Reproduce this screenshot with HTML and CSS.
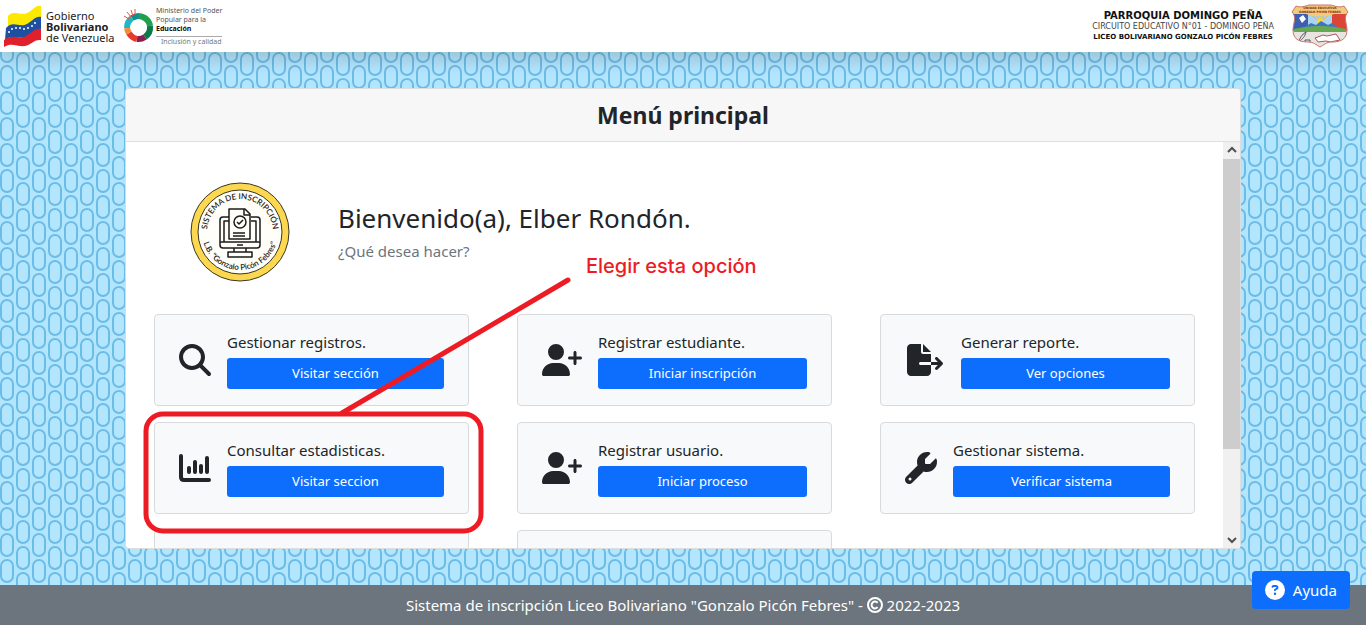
FILE: index.html
```html
<!DOCTYPE html>
<html lang="es">
<head>
<meta charset="utf-8">
<meta name="viewport" content="width=device-width, initial-scale=1">
<title>Menú principal</title>
<link rel="stylesheet" href="styles.css">
</head>
<body>
<svg class="defs" aria-hidden="true">
  <symbol id="user-plus" viewBox="0 0 640 512"><path d="M96 128a128 128 0 1 1 256 0A128 128 0 1 1 96 128zM0 482.3C0 383.8 79.8 304 178.3 304h91.4C368.2 304 448 383.8 448 482.3c0 16.4-13.3 29.7-29.7 29.7H29.7C13.3 512 0 498.7 0 482.3zM504 312V248H440c-13.3 0-24-10.7-24-24s10.7-24 24-24h64V136c0-13.3 10.7-24 24-24s24 10.7 24 24v64h64c13.3 0 24 10.7 24 24s-10.7 24-24 24H552v64c0 13.3-10.7 24-24 24s-24-10.7-24-24z"/></symbol>
</svg>

<header class="topbar">
  <div class="brand">
    <svg class="flag" viewBox="0 0 38 42" aria-hidden="true">
      <path fill="#fde800" d="M4 11C10 4 17 12 25 7c5-3 7-7 12-6v13c-6 0-8 5-13 7-8 3-14-3-20 3z"/>
      <path fill="#1f4fa0" d="M2 23c7-8 13 0 21-4 6-3 8-8 14-7v13c-6 0-9 6-15 7-8 2-13-3-21 3z"/>
      <path fill="#e0202b" d="M0 35c8-7 14 0 22-4 6-3 9-8 15-7v11c-7-1-10 5-16 6-8 1-13-4-21 1z"/>
      <g fill="#fff"><circle cx="5" cy="27" r="1"/><circle cx="8" cy="24" r="1"/><circle cx="12" cy="23" r="1"/><circle cx="16" cy="23" r="1"/><circle cx="20" cy="24" r="1"/><circle cx="24" cy="23" r="1"/><circle cx="28" cy="21" r="1"/><circle cx="31" cy="18" r="1"/></g>
    </svg>
    <p class="gov">Gobierno<br><strong>Bolivariano</strong><br>de Venezuela</p>
    <svg class="ring" viewBox="0 0 32 34" aria-hidden="true">
      <g fill="none" stroke-width="6">
        <path stroke="#1fa04a" d="M17 7a12 12 0 0 1 11 10"/>
        <path stroke="#0b7a4b" d="M28 17a12 12 0 0 1-5 11"/>
        <path stroke="#8c1d4f" d="M23 28a12 12 0 0 1-8 2"/>
        <path stroke="#e63a2e" d="M15 30a12 12 0 0 1-8-6"/>
        <path stroke="#f08a3c" d="M7 24a12 12 0 0 1-2-5"/>
        <path stroke="#1fb6c9" d="M5 19a12 12 0 0 1 5-10"/>
        <path stroke="#0f8f86" d="M10 9a12 12 0 0 1 7-2"/>
      </g>
      <path stroke="#e2554b" stroke-width="1" d="M5 3l4 5M9 1l2 6M13 0v6M2 7l5 3"/>
    </svg>
    <div class="ministry">
      <p>Ministerio del Poder<br>Popular para la<br><strong>Educación</strong></p>
      <p class="motto">Inclusión y calidad</p>
    </div>
  </div>
  <div class="school">
    <div class="school-text">
      <p class="parish">PARROQUIA DOMINGO PEÑA</p>
      <p class="circuit">CIRCUITO EDUCATIVO N°01 - DOMINGO PEÑA</p>
      <p class="lyceum">LICEO BOLIVARIANO GONZALO PICÓN FEBRES</p>
    </div>
    <svg class="crest" viewBox="0 0 60 44" role="img" aria-label="Escudo del liceo">
      <clipPath id="shield"><path d="M6 2c5 2 9 0 13-1h22c4 1 8 3 13 1l4 6c-5 5-1 12-1 18 0 9-6 12-15 12-6 0-8 3-12 5-4-2-6-5-12-5C9 38 3 35 3 26 3 20 7 13 2 8z"/></clipPath>
      <g clip-path="url(#shield)">
        <rect width="60" height="44" fill="#f4e6e2"/>
        <rect y="10" width="18" height="17" fill="#3d5fb0"/>
        <rect x="42" y="10" width="18" height="17" fill="#dd4438"/>
        <path fill="#a9d4f3" d="M18 10h24v14H18z"/>
        <path stroke="#f1b53c" stroke-width="1" d="M30 18L20 10M30 18L25 9M30 18V9M30 18l5-9M30 18l10-8"/>
        <circle cx="30" cy="17" r="3" fill="#f6d546"/>
        <path fill="#3f74c4" d="M10 26l11-7 5 2 5-4 7 4 4-2 9 7z"/>
        <path fill="#64a951" d="M4 25c16-4 36-4 52 0v4H4z"/>
        <path fill="#f3cb77" d="M0 0h60v10H44l-6 2H22l-6-2H0z"/>
        <path fill="#fff" d="M9 14l4-3 3 4-4 4z"/>
        <path fill="#e9e4df" d="M3 28h54v16H3z"/>
        <path fill="#fff" stroke="#a55" stroke-width="1" d="M25 34l8-3 4 1 9-2 4 6-10 2-4-1-8 1z"/>
        <path fill="none" stroke="#556" stroke-width="1" d="M8 39c2-5 4-9 8-11-1 5-4 7-6 9m5-1h5v3h-5z"/>
      </g>
      <path fill="none" stroke="#c9776c" d="M6 2c5 2 9 0 13-1h22c4 1 8 3 13 1l4 6c-5 5-1 12-1 18 0 9-6 12-15 12-6 0-8 3-12 5-4-2-6-5-12-5C9 38 3 35 3 26 3 20 7 13 2 8z"/>
      <text class="crest-text" x="30" y="5" text-anchor="middle">UNIDAD EDUCATIVA</text>
      <text class="crest-text" x="30" y="9" text-anchor="middle">GONZALO PICÓN FEBRES</text>
    </svg>
  </div>
</header>

<main class="main">
  <section class="panel">
    <h1 class="panel-title">Menú principal</h1>
    <div class="panel-body">
      <div class="content">
        <div class="welcome">
          <svg class="seal" viewBox="0 0 100 100" role="img" aria-label="Sistema de inscripción L.B. Gonzalo Picón Febres">
            <circle cx="50" cy="50" r="49" fill="#fbd84f" stroke="#3a3526"/>
            <circle cx="50" cy="50" r="42" fill="#fffef8" stroke="#3a3526"/>
            <path id="arc-top" fill="none" d="M17 50a33 33 0 0 1 66 0"/>
            <path id="arc-bottom" fill="none" d="M12 50a38 38 0 0 0 76 0"/>
            <text class="seal-text" text-anchor="middle"><textPath href="#arc-top" startOffset="50%">SISTEMA DE INSCRIPCIÓN</textPath></text>
            <text class="seal-text" text-anchor="middle"><textPath href="#arc-bottom" startOffset="50%">L.B. "Gonzalo Picón Febres"</textPath></text>
            <g fill="none" stroke="#1b1b1b" stroke-width="1.5" stroke-linejoin="round">
              <path d="M40 35h-7q-3 0-3 3v25q0 3 3 3h34q3 0 3-3V38q0-3-3-3h-6M39 39h-5v21M66 60V39h-5M30 60h40"/>
              <path fill="#fffef8" d="M39 57V27h16l5 5v25z"/>
              <path d="M54 27v6h6M43 51h12M43 54h12M47 63h6M44 66v4M56 66v4M38 70h24v5H38z"/>
              <circle cx="50" cy="40" r="6"/><path d="M47 40l2 2 4-4"/>
            </g>
          </svg>
          <div>
            <h2 class="greeting">Bienvenido(a), Elber Rondón.</h2>
            <p class="question">¿Qué desea hacer?</p>
          </div>
        </div>

        <div class="options">
          <article class="option">
            <svg class="icon" viewBox="0 0 512 512" aria-hidden="true"><path d="M416 208c0 45.9-14.9 88.3-40 122.7L502.6 457.4c12.5 12.5 12.5 32.8 0 45.3s-32.8 12.5-45.3 0L330.7 376c-34.4 25.2-76.8 40-122.7 40C93.1 416 0 322.9 0 208S93.1 0 208 0S416 93.1 416 208zM208 352a144 144 0 1 0 0-288 144 144 0 1 0 0 288z"/></svg>
            <div class="option-body"><p>Gestionar registros.</p><a class="btn" href="#registros">Visitar sección</a></div>
          </article>
          <article class="option">
            <svg class="icon icon-wide" aria-hidden="true"><use href="#user-plus"/></svg>
            <div class="option-body"><p>Registrar estudiante.</p><a class="btn" href="#estudiante">Iniciar inscripción</a></div>
          </article>
          <article class="option">
            <svg class="icon icon-wide" viewBox="-32 0 640 512" aria-hidden="true"><path d="M0 64C0 28.7 28.7 0 64 0H224V128c0 17.7 14.3 32 32 32H384V288H216c-13.3 0-24 10.7-24 24s10.7 24 24 24H384V448c0 35.3-28.7 64-64 64H64c-35.3 0-64-28.7-64-64V64zM384 336V288H494.1l-39-39c-9.4-9.4-9.4-24.6 0-33.9s24.6-9.4 33.9 0l80 80c9.4 9.4 9.4 24.6 0 33.9l-80 80c-9.4 9.4-24.6 9.4-33.9 0s-9.4-24.6 0-33.9l39-39H384zm0-208H256V0L384 128z"/></svg>
            <div class="option-body"><p>Generar reporte.</p><a class="btn" href="#reporte">Ver opciones</a></div>
          </article>
          <article class="option">
            <svg class="icon" viewBox="0 0 32 32" aria-hidden="true"><path class="line" d="M2 4v21q0 3 3 3h25M10 16v4M16 10v10M22 14v6M28 6v14"/></svg>
            <div class="option-body"><p>Consultar estadisticas.</p><a class="btn" href="#estadisticas">Visitar seccion</a></div>
          </article>
          <article class="option">
            <svg class="icon icon-wide" aria-hidden="true"><use href="#user-plus"/></svg>
            <div class="option-body"><p>Registrar usuario.</p><a class="btn" href="#usuario">Iniciar proceso</a></div>
          </article>
          <article class="option">
            <svg class="icon" viewBox="0 0 512 512" aria-hidden="true"><path d="M352 320c88.4 0 160-71.6 160-160c0-15.3-2.2-30.1-6.2-44.2c-3.1-10.8-16.4-13.2-24.3-5.3l-76.8 76.8c-3 3-7.1 4.7-11.3 4.7H336c-8.8 0-16-7.2-16-16V118.6c0-4.2 1.7-8.3 4.7-11.3l76.8-76.8c7.9-7.9 5.4-21.2-5.3-24.3C382.1 2.2 367.3 0 352 0C263.6 0 192 71.6 192 160c0 19.1 3.4 37.5 9.5 54.5L19.9 396.1C7.2 408.8 0 426.1 0 444.1C0 481.6 30.4 512 67.9 512c18 0 35.3-7.2 48-19.9L297.5 310.5c17 6.2 35.4 9.5 54.5 9.5zM80 408a24 24 0 1 1 0 48 24 24 0 1 1 0-48z"/></svg>
            <div class="option-body"><p>Gestionar sistema.</p><a class="btn" href="#sistema">Verificar sistema</a></div>
          </article>
          <article class="option"></article>
          <article class="option"></article>
        </div>
      </div>
      <div class="scrollbar" aria-hidden="true">
        <svg class="arrow" viewBox="0 0 17 17"><path d="M5 10l4-4 4 4"/></svg>
        <div class="track"><div class="thumb"></div></div>
        <svg class="arrow" viewBox="0 0 17 17"><path d="M5 7l4 4 4-4"/></svg>
      </div>
    </div>
    <svg class="callout">
      <rect x="21" y="326" width="335" height="117" rx="17"/>
      <path d="M217 325L443 192"/>
      <text x="461" y="185">Elegir esta opción</text>
    </svg>
  </section>
</main>

<footer class="footer">
  <p>Sistema de inscripción Liceo Bolivariano "Gonzalo Picón Febres" -
    <svg class="copy" viewBox="0 0 16 16" role="img" aria-label="Copyright"><circle cx="8" cy="8" r="7"/><path d="M10.6 10.2a3.4 3.4 0 1 1 0-4.4"/></svg>
    2022-2023</p>
</footer>

<button class="help" type="button">
  <svg viewBox="0 0 512 512" aria-hidden="true"><path d="M256 512A256 256 0 1 0 256 0a256 256 0 1 0 0 512zM169.8 165.3c7.9-22.3 29.1-37.3 52.8-37.3h58.3c34.9 0 63.1 28.3 63.1 63.1c0 22.6-12.1 43.5-31.7 54.8L280 264.4c-.2 13-10.9 23.6-24 23.6c-13.3 0-24-10.7-24-24V250.5c0-8.6 4.6-16.5 12.1-20.8l44.3-25.4c4.7-2.7 7.6-7.7 7.6-13.1c0-8.4-6.8-15.1-15.1-15.1H222.6c-3.4 0-6.4 2.1-7.5 5.3l-.4 1.2c-4.4 12.5-18.2 19-30.6 14.6s-19-18.2-14.6-30.6l.4-1.2zM224 352a32 32 0 1 1 64 0 32 32 0 1 1-64 0z"/></svg>
  Ayuda
</button>
</body>
</html>
```

FILE: styles.css
```css
* { box-sizing: border-box; }

body {
  margin: 0;
  height: 100vh;
  display: flex;
  flex-direction: column;
  font: 15px/24px "Noto Sans", "Open Sans", sans-serif;
  color: #212529;
  background: #b3e5fc url("data:image/svg+xml,%3Csvg xmlns='http://www.w3.org/2000/svg' width='32' height='26'%3E%3Cg fill='none' stroke='%236bbde9' stroke-width='2'%3E%3Crect x='1' y='-12' width='12' height='22' rx='6'/%3E%3Crect x='1' y='14' width='12' height='22' rx='6'/%3E%3Crect x='17' y='1' width='12' height='22' rx='6'/%3E%3C/g%3E%3C/svg%3E");
}

h1, h2, p { margin: 0; }

.defs { display: none; }

.topbar {
  display: flex;
  justify-content: space-between;
  align-items: center;
  height: 52px;
  flex: none;
  padding: 0 16px 0 4px;
  background: #fff;
  box-shadow: 0 8px 16px rgba(0, 0, 0, .15);
}

.brand, .school { display: flex; align-items: center; }
.flag { width: 38px; height: 42px; margin-right: 4px; }
.gov { font-size: 11px; line-height: 11px; color: #222; width: 76px; white-space: nowrap; }
.ring { width: 32px; height: 34px; }
.ministry { margin-left: 2px; font-size: 7px; line-height: 9px; color: #555; white-space: nowrap; }
.ministry strong { color: #111; }
.motto { margin-top: 3px; padding-left: 5px; border-top: 1px solid #aaa; color: #777; }

.school { gap: 16px; }
.school-text { text-align: center; font-family: "DejaVu Sans", sans-serif; line-height: 10px; color: #111; white-space: nowrap; }
.parish { font-size: 10px; line-height: 12px; font-weight: bold; }
.circuit { font-size: 8px; color: #444; }
.lyceum { font-size: 7px; font-weight: bold; }
.crest { width: 60px; height: 44px; }
.crest-text { font: bold 3px "DejaVu Sans", sans-serif; fill: #7a2a22; }

.main {
  flex: 1;
  min-height: 0;
  width: 100%;
  max-width: 1140px;
  margin: 0 auto;
  padding: 36px 12px;
}

.panel {
  position: relative;
  height: 100%;
  display: flex;
  flex-direction: column;
  background: #fff;
  border: 1px solid #d9dee1;
  border-radius: 4px;
}
.panel-title {
  padding: 10px 16px;
  font-size: 23px;
  line-height: 32px;
  text-align: center;
  background: #f7f7f7;
  border-bottom: 1px solid #dfdfdf;
  border-radius: 4px 4px 0 0;
}
.panel-body { flex: 1; min-height: 0; display: flex; }
.content { flex: 1; min-width: 0; padding: 40px 28px 28px; overflow-y: auto; scrollbar-width: none; }

.welcome { display: flex; align-items: center; gap: 48px; padding: 0 36px; margin-bottom: 32px; }
.seal { width: 100px; height: 100px; flex: none; }
.seal-text { font: 600 8px Lato, sans-serif; fill: #222; }
.greeting { font-size: 26px; line-height: 34px; font-weight: 400; margin-bottom: 4px; }
.question { color: #6c757d; }

.options { display: grid; grid-template-columns: repeat(3, 1fr); gap: 16px 48px; }
.option {
  display: flex;
  align-items: center;
  gap: 16px;
  min-height: 92px;
  padding: 14px 24px;
  background: #f8f9fa;
  border: 1px solid #d8dadc;
  border-radius: 4px;
}
.option-body { flex: 1; display: grid; gap: 4px; padding-bottom: 2px; }
.icon { width: 32px; height: 32px; flex: none; fill: #212529; }
.icon-wide { width: 40px; }
.line { fill: none; stroke: #212529; stroke-width: 4; stroke-linecap: round; }
.btn {
  padding: 5px 8px;
  font-size: 13px;
  line-height: 21px;
  text-align: center;
  text-decoration: none;
  color: #fff;
  background: #0d6efd;
  border-radius: 3px;
}

.scrollbar { width: 17px; display: flex; flex-direction: column; background: #f0f0f0; }
.arrow { width: 17px; height: 17px; fill: none; stroke: #505050; stroke-width: 2; }
.track { flex: 1; }
.thumb { height: 78%; background: #cdcdcd; }

.callout { position: absolute; top: -1px; left: -1px; width: 100%; height: 100%; pointer-events: none; }
.callout rect, .callout path { fill: none; stroke: #ed1c24; stroke-width: 5; stroke-linecap: round; }
.callout text { font: 500 20px Inter, sans-serif; fill: #ed1c24; }

.footer { flex: none; padding: 8px 16px; text-align: center; color: #fff; background: #6c757d; }
.copy { width: 16px; height: 16px; vertical-align: -2px; fill: none; stroke: #fff; stroke-width: 2; }

.help {
  position: fixed;
  right: 16px;
  bottom: 16px;
  display: flex;
  align-items: center;
  gap: 8px;
  padding: 7px 13px;
  font: inherit;
  color: #fff;
  background: #0d6efd;
  border: 0;
  border-radius: 4px;
}
.help svg { width: 20px; height: 20px; fill: #fff; }
```
